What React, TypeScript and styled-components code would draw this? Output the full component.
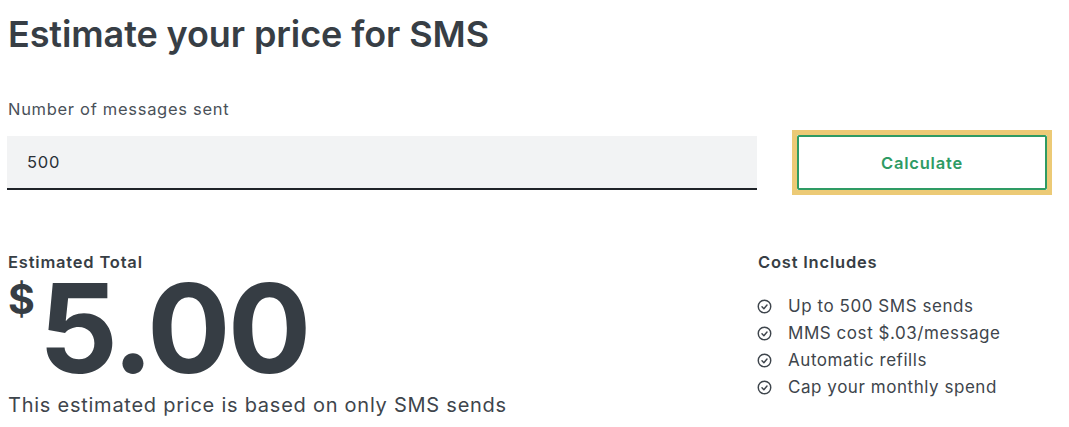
import React from "react";
import styled, { createGlobalStyle } from "styled-components";

const Global = createGlobalStyle`
  html, body { margin: 0; padding: 0; background: #ffffff; }
  body { font-family: Inter, "Noto Sans", "Liberation Sans", sans-serif; color: #373e45; }
  * { box-sizing: border-box; }
`;

const Page = styled.main`
  padding: 12px 17px 0 7px;
  width: 1069px;
`;

const Title = styled.h1`
  margin: 0 0 0 1px;
  font-size: 36px;
  line-height: 44px;
  font-weight: 600;
  color: #373e45;
  letter-spacing: -0.1px;
`;

const FieldLabel = styled.label`
  display: block;
  margin: 43px 0 0 1px;
  font-size: 16.5px;
  line-height: 20px;
  letter-spacing: 0.7px;
  color: #4a5159;
`;

const FormRow = styled.div`
  display: grid;
  grid-template-columns: 750px 260px;
  column-gap: 35px;
  align-items: center;
  margin-top: 11px;
`;

const Input = styled.input`
  height: 54px;
  border: none;
  border-bottom: 2px solid #1f2328;
  background: #f2f3f4;
  padding: 0 20px 0;
  font: inherit;
  font-size: 16.5px;
  letter-spacing: 0.8px;
  color: #2a3036;
  outline: none;
`;

const Button = styled.button`
  height: 65px;
  border: 5px solid #ecca76;
  background: #ffffff;
  padding: 0;
  cursor: pointer;
  font: inherit;
`;

const ButtonInner = styled.span`
  display: flex;
  align-items: center;
  justify-content: center;
  height: 100%;
  border: 2px solid #2e9b64;
  border-radius: 2px;
  color: #2e9b64;
  font-size: 16.5px;
  font-weight: 600;
  letter-spacing: 0.8px;
  padding-top: 1px;
`;

const Results = styled.section`
  display: grid;
  grid-template-columns: 750px 1fr;
  margin-top: 57px;
`;

const SubHeading = styled.h2`
  margin: 0 0 0 1px;
  font-size: 16.5px;
  line-height: 20px;
  font-weight: 600;
  letter-spacing: 0.8px;
  color: #373e45;
`;

const Amount = styled.div`
  display: flex;
  align-items: flex-start;
  color: #363d44;
  font-weight: 700;
  height: 119px;
`;

const Currency = styled.span`
  font-size: 41px;
  line-height: 50px;
  margin: 2px 4px 0 1px;
`;

const Figure = styled.span`
  font-size: 124px;
  line-height: 112px;
  letter-spacing: -3px;
`;

const Note = styled.p`
  margin: 2px 0 0 1px;
  font-size: 20px;
  line-height: 24px;
  letter-spacing: 0.75px;
  color: #3e454c;
`;

const List = styled.ul`
  list-style: none;
  margin: 21px 0 0 0;
  padding: 0;
`;

const Item = styled.li`
  display: flex;
  align-items: center;
  gap: 16px;
  font-size: 17px;
  line-height: 27px;
  letter-spacing: 0.55px;
  color: #3e454c;
`;

const Check = () => (
  <svg width="15" height="15" viewBox="0 0 24 24" fill="none" stroke="#3e454c" strokeWidth="2.3" strokeLinecap="round" strokeLinejoin="round">
    <circle cx="12" cy="12" r="10" />
    <path d="m8 12.5 3 3 5-6" />
  </svg>
);

const includes = [
  "Up to 500 SMS sends",
  "MMS cost $.03/message",
  "Automatic refills",
  "Cap your monthly spend",
];

export default function App() {
  return (
    <Page>
      <Global />
      <Title>Estimate your price for SMS</Title>
      <FieldLabel htmlFor="count">Number of messages sent</FieldLabel>
      <FormRow>
        <Input id="count" defaultValue="500" />
        <Button type="button">
          <ButtonInner>Calculate</ButtonInner>
        </Button>
      </FormRow>
      <Results>
        <div>
          <SubHeading>Estimated Total</SubHeading>
          <Amount>
            <Currency>$</Currency>
            <Figure>5.00</Figure>
          </Amount>
          <Note>This estimated price is based on only SMS sends</Note>
        </div>
        <div>
          <SubHeading>Cost Includes</SubHeading>
          <List>
            {includes.map((t) => (
              <Item key={t}>
                <Check />
                {t}
              </Item>
            ))}
          </List>
        </div>
      </Results>
    </Page>
  );
}
